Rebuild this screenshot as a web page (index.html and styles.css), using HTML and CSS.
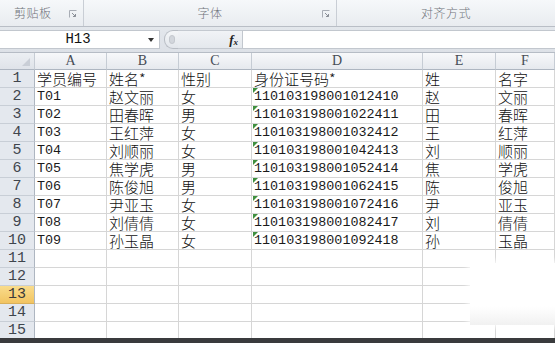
FILE: index.html
```html
<!DOCTYPE html>
<html lang="zh">
<head>
<meta charset="utf-8">
<link rel="stylesheet" href="styles.css">
</head>
<body>
<div class="app">
  <div class="ribbon">
    <div class="group g-clip"><span class="glabel">剪贴板</span><svg class="launch" width="8" height="8" viewBox="0 0 8 8"><path d="M0.5 7.5V0.5H7.5" fill="none" stroke="#a8adb5"/><path d="M3 3L6.5 6.5M6.5 4V6.5H4" fill="none" stroke="#8a8f97"/></svg></div>
    <div class="group g-font"><span class="glabel">字体</span><svg class="launch" width="8" height="8" viewBox="0 0 8 8"><path d="M0.5 7.5V0.5H7.5" fill="none" stroke="#a8adb5"/><path d="M3 3L6.5 6.5M6.5 4V6.5H4" fill="none" stroke="#8a8f97"/></svg></div>
    <div class="group g-align"><span class="glabel">对齐方式</span></div>
  </div>
  <div class="fbar">
    <div class="namebox"><span class="nb-text">H13</span><span class="nb-arrow"></span></div>
    <div class="grip"><span class="grip-dot"></span></div>
    <div class="fxzone"><span class="fx">f<sub>x</sub></span></div>
    <div class="finput"></div>
  </div>
  <div class="sheet">
    <div class="grid">
      <div class="ch corner"><svg width="8" height="8" viewBox="0 0 8 8"><path d="M8 0V8H0Z" fill="#c9ced6"/></svg></div>
      <div class="ch">A</div><div class="ch">B</div><div class="ch">C</div><div class="ch">D</div><div class="ch">E</div><div class="ch">F</div>

      <div class="rh">1</div><div class="c">学员编号</div><div class="c">姓名*</div><div class="c">性别</div><div class="c">身份证号码*</div><div class="c">姓</div><div class="c">名字</div>
      <div class="rh">2</div><div class="c lat">T01</div><div class="c">赵文丽</div><div class="c">女</div><div class="c lat tri">110103198001012410</div><div class="c">赵</div><div class="c">文丽</div>
      <div class="rh">3</div><div class="c lat">T02</div><div class="c">田春晖</div><div class="c">男</div><div class="c lat tri">110103198001022411</div><div class="c">田</div><div class="c">春晖</div>
      <div class="rh">4</div><div class="c lat">T03</div><div class="c">王红萍</div><div class="c">女</div><div class="c lat tri">110103198001032412</div><div class="c">王</div><div class="c">红萍</div>
      <div class="rh">5</div><div class="c lat">T04</div><div class="c">刘顺丽</div><div class="c">女</div><div class="c lat tri">110103198001042413</div><div class="c">刘</div><div class="c">顺丽</div>
      <div class="rh">6</div><div class="c lat">T05</div><div class="c">焦学虎</div><div class="c">男</div><div class="c lat tri">110103198001052414</div><div class="c">焦</div><div class="c">学虎</div>
      <div class="rh">7</div><div class="c lat">T06</div><div class="c">陈俊旭</div><div class="c">男</div><div class="c lat tri">110103198001062415</div><div class="c">陈</div><div class="c">俊旭</div>
      <div class="rh">8</div><div class="c lat">T07</div><div class="c">尹亚玉</div><div class="c">女</div><div class="c lat tri">110103198001072416</div><div class="c">尹</div><div class="c">亚玉</div>
      <div class="rh">9</div><div class="c lat">T08</div><div class="c">刘倩倩</div><div class="c">女</div><div class="c lat tri">110103198001082417</div><div class="c">刘</div><div class="c">倩倩</div>
      <div class="rh">10</div><div class="c lat">T09</div><div class="c">孙玉晶</div><div class="c">女</div><div class="c lat tri">110103198001092418</div><div class="c">孙</div><div class="c">玉晶</div>
      <div class="rh">11</div><div class="c"></div><div class="c"></div><div class="c"></div><div class="c"></div><div class="c"></div><div class="c"></div>
      <div class="rh">12</div><div class="c"></div><div class="c"></div><div class="c"></div><div class="c"></div><div class="c"></div><div class="c"></div>
      <div class="rh sel">13</div><div class="c"></div><div class="c"></div><div class="c"></div><div class="c"></div><div class="c"></div><div class="c"></div>
      <div class="rh">14</div><div class="c"></div><div class="c"></div><div class="c"></div><div class="c"></div><div class="c"></div><div class="c"></div>
      <div class="rh">15</div><div class="c"></div><div class="c"></div><div class="c"></div><div class="c"></div><div class="c"></div><div class="c"></div>
    </div>
    <div class="blob"></div>
  </div>
  <div class="bottombar"></div>
</div>
</body>
</html>
```
FILE: styles.css
```css
* { box-sizing: border-box; }
html, body { margin: 0; padding: 0; }
body { width: 555px; height: 343px; overflow: hidden; background: #fff; font-family: "Noto Sans CJK SC", sans-serif; }
.app { display: flex; flex-direction: column; height: 343px; }

.ribbon { height: 27px; display: flex; background: linear-gradient(#f6f8fa, #e9ecf0); border-bottom: 1px solid #b9bec6; }
.group { position: relative; display: flex; align-items: center; justify-content: center; border-right: 1px solid #c9ced5; }
.g-clip { width: 84px; justify-content: flex-start; padding-left: 14px; }
.g-font { width: 253px; }
.g-align { flex: 1; border-right: none; }
.glabel { font-size: 12px; line-height: 16px; color: #6f737a; font-weight: 300; letter-spacing: 0.5px; }
.launch { position: absolute; right: 6px; top: 10px; }

.fbar { height: 26px; display: flex; align-items: flex-start; background: linear-gradient(#e3e7ec, #dde1e7); padding-top: 3px; border-bottom: 1px solid #b6bcc5; }
.namebox { width: 160px; height: 19px; background: #fff; border: 1px solid #c2c7ce; border-left: none; display: flex; align-items: center; position: relative; }
.nb-text { flex: 1; text-align: center; font-family: "Liberation Mono", monospace; font-size: 14px; line-height: 17px; color: #111; padding-left: 8px; }
.nb-arrow { width: 0; height: 0; border-left: 3px solid transparent; border-right: 3px solid transparent; border-top: 4px solid #333; margin-right: 5px; }
.grip { width: 14px; height: 19px; border: 1px solid #b8bdc4; border-right: none; border-radius: 9px 0 0 9px; margin-left: 4px; background: linear-gradient(#f4f6f8, #e2e6eb); display: flex; align-items: center; justify-content: center; }
.grip-dot { width: 6px; height: 9px; border-radius: 3px; background: #d2d6dc; border: 1px solid #c4c8ce; }
.fxzone { width: 64px; height: 19px; display: flex; justify-content: flex-end; align-items: center; padding-right: 4px; background: linear-gradient(#f1f3f6, #e4e8ed); border-top: 1px solid #c4c9d0; border-bottom: 1px solid #c4c9d0; }
.fx { font-family: "Liberation Serif", serif; font-style: italic; font-weight: bold; font-size: 13px; line-height: 15px; color: #222; }
.fx sub { font-size: 9px; line-height: 9px; vertical-align: -1px; }
.finput { flex: 1; height: 19px; background: #fff; border: 1px solid #c2c7ce; border-right: none; }

.sheet { position: relative; flex: 1; overflow: hidden; }
.grid { display: grid; grid-template-columns: 35px 72px 72px 73px 171px 73px 1fr; grid-template-rows: 17px repeat(15, 18px); }
.ch { background: linear-gradient(#f7f8fa, #e6e9ee); border-right: 1px solid #c6ccd4; border-bottom: 1px solid #aeb6c1; font-family: "Liberation Serif", serif; font-size: 14px; line-height: 16px; color: #464c55; display: flex; align-items: center; justify-content: center; }
.corner { justify-content: flex-end; align-items: flex-end; padding: 0 4px 3px 0; background: linear-gradient(#eceff3, #dfe3e9); }
.rh { background: #e4e8ee; border-right: 1px solid #aeb6c1; border-bottom: 1px solid #c8ced6; font-family: "Liberation Mono", monospace; font-size: 15px; line-height: 17px; color: #3f454d; display: flex; align-items: center; justify-content: center; }
.rh.sel { background: linear-gradient(#f9dc8c, #f2c461); color: #3a3a3a; border-bottom-color: #d9b05a; }
.c { border-right: 1px solid #d6d6d6; border-bottom: 1px solid #d6d6d6; font-size: 15px; line-height: 17px; font-weight: 300; color: #111; display: flex; align-items: center; padding-left: 2px; white-space: nowrap; position: relative; }
.c.lat { font-family: "Liberation Mono", monospace; font-weight: normal; font-size: 13.4px; padding-left: 2px; color: #1a1a1a; }
.c.tri::before { content: ""; position: absolute; left: 1px; top: 0; border-top: 5px solid #3f8f3f; border-right: 5px solid transparent; }

.blob { position: absolute; left: 470px; top: 210px; width: 90px; height: 62px; background: linear-gradient(#ffffff 70%, #f1f1f1); box-shadow: 0 0 6px 2px rgba(255,255,255,0.9); }
.bottombar { height: 5px; background: #3a3b3d; flex: none; }
```
